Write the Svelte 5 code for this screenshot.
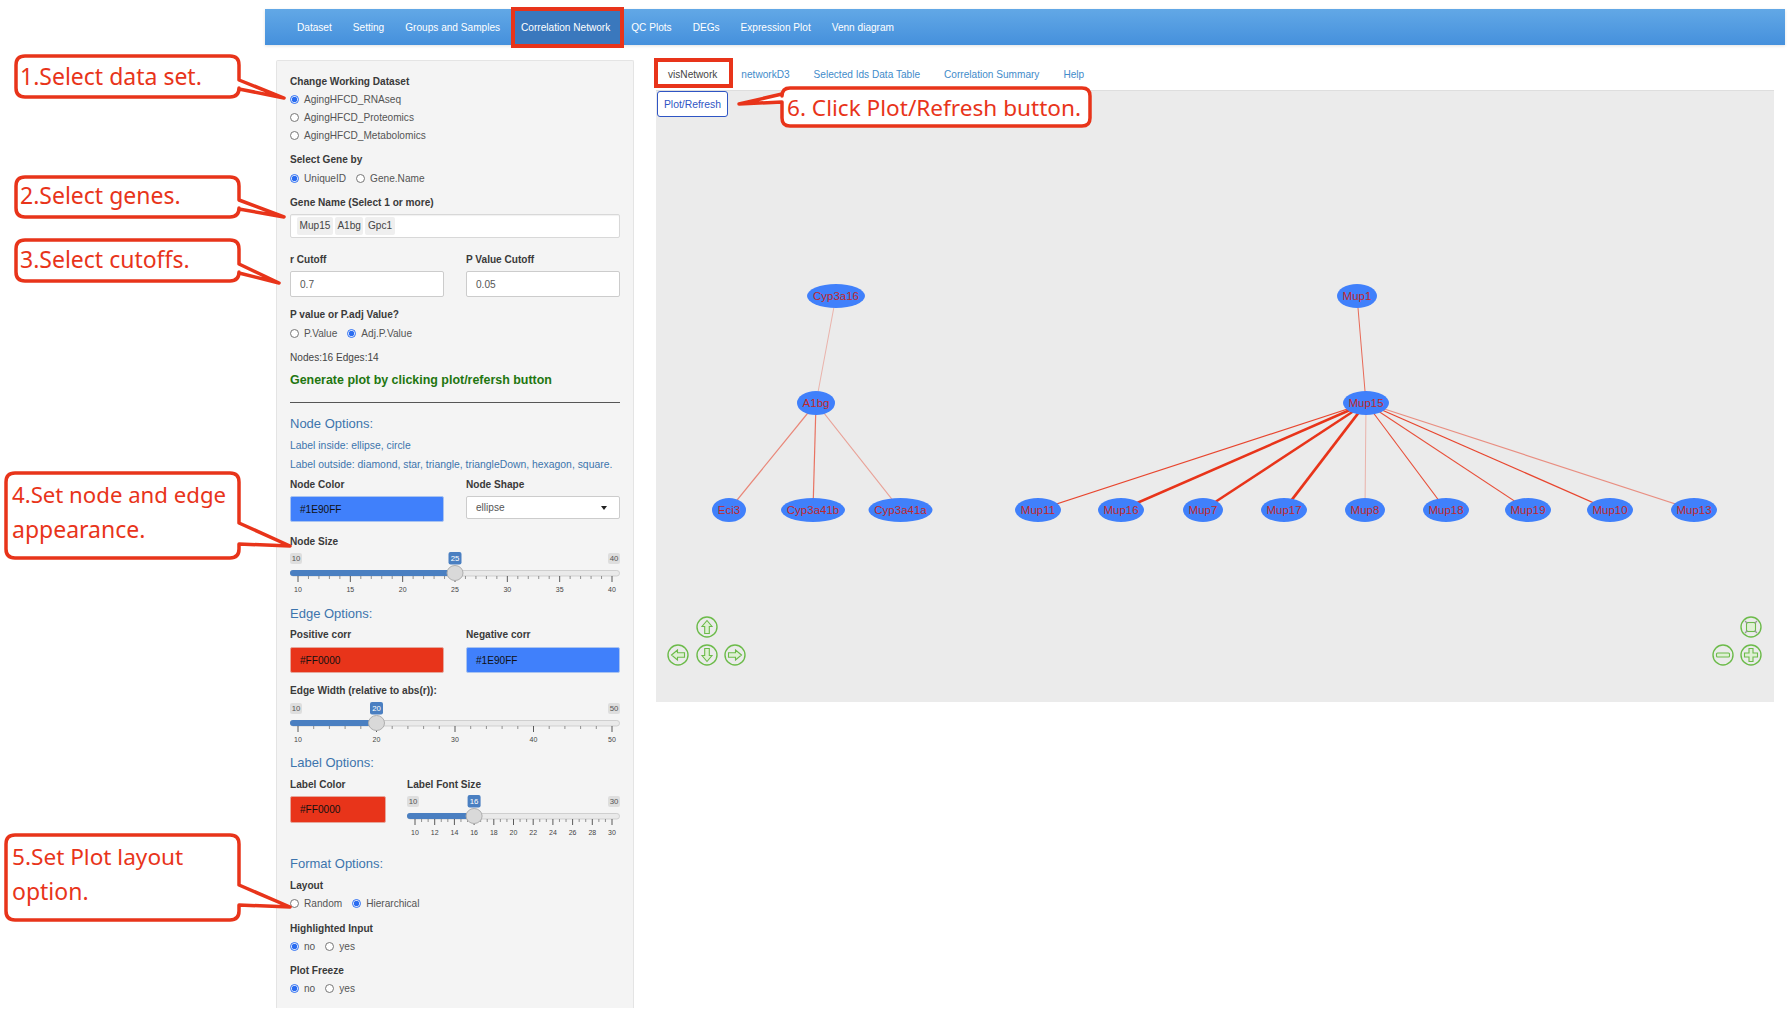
<script>
  const navItems = ['Dataset', 'Setting', 'Groups and Samples', 'Correlation Network', 'QC Plots', 'DEGs', 'Expression Plot', 'Venn diagram'];
  const tabs = ['visNetwork', 'networkD3', 'Selected Ids Data Table', 'Correlation Summary', 'Help'];

  const nodes = {
    Cyp3a16: [836, 296, 29], A1bg: [816, 403, 19], Eci3: [729, 510, 17], Cyp3a41b: [813, 510, 32], Cyp3a41a: [900.5, 510, 32],
    Mup1: [1357, 296, 20], Mup15: [1366, 403, 23], Mup11: [1038, 510, 23], Mup16: [1121, 510, 23], Mup7: [1203, 510, 20],
    Mup17: [1284, 510, 23], Mup8: [1365, 510, 20], Mup18: [1446, 510, 23], Mup19: [1528, 510, 23], Mup10: [1610, 510, 23], Mup13: [1694, 510, 23]
  };
  const edges = [
    ['A1bg', 'Cyp3a16', 1, 0.3], ['A1bg', 'Eci3', 1.2, 0.55], ['A1bg', 'Cyp3a41b', 1.2, 0.65], ['A1bg', 'Cyp3a41a', 1.2, 0.4],
    ['Mup15', 'Mup1', 1, 0.7], ['Mup15', 'Mup11', 1.2, 0.9], ['Mup15', 'Mup16', 2.6, 1], ['Mup15', 'Mup7', 2.4, 1],
    ['Mup15', 'Mup17', 2.8, 1], ['Mup15', 'Mup8', 1, 0.3], ['Mup15', 'Mup18', 1.1, 0.85], ['Mup15', 'Mup19', 1.1, 0.85],
    ['Mup15', 'Mup10', 1.3, 0.9], ['Mup15', 'Mup13', 1.2, 0.5]
  ];

  function grid(w, min, max, majorStep, minorPerMajor, labelStep) {
    const x0 = 8, x1 = w - 8;
    const px = (v) => x0 + ((v - min) / (max - min)) * (x1 - x0);
    const ticks = [], labels = [];
    const minorStep = majorStep / (minorPerMajor + 1);
    for (let v = min; v <= max + 1e-6; v += minorStep) {
      const isMajor = Math.abs((v - min) / majorStep - Math.round((v - min) / majorStep)) < 1e-6;
      ticks.push({ x: px(v), major: isMajor });
    }
    for (let v = min; v <= max; v += labelStep) labels.push({ x: px(v), t: v });
    return { ticks, labels, px };
  }
  const sliders = {
    node: { w: 330, min: 10, max: 40, val: 25, g: grid(330, 10, 40, 5, 4, 5) },
    edge: { w: 330, min: 10, max: 50, val: 20, g: grid(330, 10, 50, 10, 4, 10) },
    font: { w: 213, min: 10, max: 30, val: 16, g: grid(213, 10, 30, 2, 2, 2) }
  };

  const RED = '#e8341a';
  function callout(x0, y0, x1, y1, t1, t2, tip) {
    const r = 9;
    return `M${x0 + r} ${y0} H${x1 - r} Q${x1} ${y0} ${x1} ${y0 + r} V${t1} L${tip[0]} ${tip[1]} L${x1} ${t2} V${y1 - r} Q${x1} ${y1} ${x1 - r} ${y1} H${x0 + r} Q${x0} ${y1} ${x0} ${y1 - r} V${y0 + r} Q${x0} ${y0} ${x0 + r} ${y0} Z`;
  }
  const callouts = [
    callout(16, 56, 239, 97, 80, 89, [284, 98]),
    callout(16, 177, 239, 217, 200, 209, [284, 217]),
    callout(16, 240, 239, 281, 264, 273, [279, 283]),
    callout(6, 473, 239, 558, 523, 544, [290, 546]),
    callout(6, 835, 239, 920, 885, 905, [290, 907])
  ];
  const call6 = 'M790 88 H1082 Q1090 88 1090 96 V118 Q1090 126 1082 126 H790 Q782 126 782 118 V102 L739 104 L782 94 V96 Q782 88 790 88 Z';
  const texts = [
    ['1.Select data set.', 20, 77, 23], ['2.Select genes.', 20, 196, 23], ['3.Select cutoffs.', 20, 260, 23],
    ['4.Set node and edge', 12, 495, 22.2], ['appearance.', 12, 530, 23], ['5.Set Plot layout', 12, 857, 22.6], ['option.', 12, 892, 23]
  ];
</script>

{#snippet radio(name, label, checked)}
  <label class="radio"><input type="radio" {name} {checked} /><span>{label}</span></label>
{/snippet}

{#snippet slider(s)}
  {@const pos = s.g.px(s.val)}
  <svg class="slider" width={s.w} height="44" viewBox="0 0 {s.w} 44">
    <rect x="0" y="2" width="12" height="11" rx="2" fill="#dedede" />
    <text x="6" y="10.3" class="sv">{s.min}</text>
    <rect x={s.w - 12} y="2" width="12" height="11" rx="2" fill="#dedede" />
    <text x={s.w - 6} y="10.3" class="sv">{s.max}</text>
    <rect x={pos - 6.5} y="1" width="13" height="12.5" rx="2" fill="#4a7fc1" />
    <text x={pos} y="10.3" class="sv hi">{s.val}</text>
    <rect x="0.5" y="19.5" width={s.w - 1} height="5.5" rx="2.7" fill="#eaeaea" stroke="#cfcfcf" />
    <rect x="0" y="19" width={pos} height="6" rx="3" fill="#4a7fc1" />
    {#each s.g.ticks as t}
      <line x1={t.x} x2={t.x} y1="25" y2={t.major ? 31 : 28} stroke={t.major ? '#333' : '#777'} stroke-width="0.8" />
    {/each}
    {#each s.g.labels as l}
      <text x={l.x} y="40.5" class="st">{l.t}</text>
    {/each}
    <ellipse cx={pos} cy="22" rx="8" ry="7.5" fill="#d9d9d9" stroke="#aeaeae" />
  </svg>
{/snippet}

<div class="page">
  <nav class="navbar">
    {#each navItems as n}
      <span class="nav-item" class:active={n === 'Correlation Network'}>{n}</span>
    {/each}
  </nav>

  <div class="body">
    <aside class="sidebar">
      <div class="lbl">Change Working Dataset</div>
      <div class="radios col">
        {@render radio('ds', 'AgingHFCD_RNAseq', true)}
        {@render radio('ds', 'AgingHFCD_Proteomics', false)}
        {@render radio('ds', 'AgingHFCD_Metabolomics', false)}
      </div>
      <div class="lbl m10">Select Gene by</div>
      <div class="radios">
        {@render radio('by', 'UniqueID', true)}
        {@render radio('by', 'Gene.Name', false)}
      </div>
      <div class="lbl m10 b5">Gene Name (Select 1 or more)</div>
      <div class="selectize">
        <span class="chip">Mup15</span><span class="chip">A1bg</span><span class="chip">Gpc1</span>
      </div>
      <div class="two m16">
        <div class="cell"><div class="lbl b5">r Cutoff</div><div class="field">0.7</div></div>
        <div class="cell"><div class="lbl b5">P Value Cutoff</div><div class="field">0.05</div></div>
      </div>
      <div class="lbl m12">P value or P.adj Value?</div>
      <div class="radios">
        {@render radio('pv', 'P.Value', false)}
        {@render radio('pv', 'Adj.P.Value', true)}
      </div>
      <div class="plain m10">Nodes:16 Edges:14</div>
      <div class="gen">Generate plot by clicking plot/refersh button</div>
      <hr />
      <h4 class="head h-node">Node Options:</h4>
      <div class="hint h1">Label inside: ellipse, circle</div>
      <div class="hint h2">Label outside: diamond, star, triangle, triangleDown, hexagon, square.</div>
      <div class="two m8">
        <div class="cell"><div class="lbl b5">Node Color</div><div class="field color blue">#1E90FF</div></div>
        <div class="cell">
          <div class="lbl b5">Node Shape</div>
          <div class="field select"><span>ellipse</span><i class="caret"></i></div>
        </div>
      </div>
      <div class="lbl m14 b3">Node Size</div>
      {@render slider(sliders.node)}
      <h4 class="head h-edge">Edge Options:</h4>
      <div class="two m7">
        <div class="cell"><div class="lbl b6">Positive corr</div><div class="field color red">#FF0000</div></div>
        <div class="cell"><div class="lbl b6">Negative corr</div><div class="field color blue">#1E90FF</div></div>
      </div>
      <div class="lbl m12 b4">Edge Width (relative to abs(r)):</div>
      {@render slider(sliders.edge)}
      <h4 class="head h-label">Label Options:</h4>
      <div class="label-row">
        <div class="label-color"><div class="lbl b5">Label Color</div><div class="field color red tall">#FF0000</div></div>
        <div class="label-size"><div class="lbl b3">Label Font Size</div>{@render slider(sliders.font)}</div>
      </div>
      <h4 class="head h-format">Format Options:</h4>
      <div class="lbl m8 b2">Layout</div>
      <div class="radios">
        {@render radio('ly', 'Random', false)}
        {@render radio('ly', 'Hierarchical', true)}
      </div>
      <div class="lbl m11 b2">Highlighted Input</div>
      <div class="radios">
        {@render radio('hi', 'no', true)}
        {@render radio('hi', 'yes', false)}
      </div>
      <div class="lbl m10 b2">Plot Freeze</div>
      <div class="radios">
        {@render radio('fr', 'no', true)}
        {@render radio('fr', 'yes', false)}
      </div>
    </aside>

    <main class="main">
      <div class="tabs">
        {#each tabs as t, i}
          <span class="tab" class:on={i === 0}>{t}</span>
        {/each}
      </div>
      <div class="canvas">
        <button class="plot-btn">Plot/Refresh</button>
        <svg class="net" viewBox="656 90 1118 612" width="1118" height="612">
          {#each edges as [a, b, w, o]}
            <line x1={nodes[a][0]} y1={nodes[a][1]} x2={nodes[b][0]} y2={nodes[b][1]} stroke="#e8341a" stroke-width={w} opacity={o} />
          {/each}
          {#each Object.entries(nodes) as [name, [x, y, rx]]}
            <ellipse cx={x} cy={y} {rx} ry="12" fill="#4080fb" />
            <text {x} y={y + 4} class="nlabel">{name}</text>
          {/each}
          <g class="vis">
            <circle cx="707" cy="627" r="10" />
            <path d="M707 620.5 L712 626.5 H709.3 V633.5 H704.7 V626.5 H702 Z" />
            <circle cx="707" cy="655" r="10" />
            <path d="M707 661.5 L712 655.5 H709.3 V648.5 H704.7 V655.5 H702 Z" />
            <circle cx="678" cy="655" r="10" />
            <path d="M671.5 655 L677.5 650 V652.7 H684.5 V657.3 H677.5 V660 Z" />
            <circle cx="735" cy="655" r="10" />
            <path d="M741.5 655 L735.5 650 V652.7 H728.5 V657.3 H735.5 V660 Z" />
            <circle cx="1723" cy="655" r="10" />
            <rect x="1716.5" y="653" width="13" height="4" rx="1" />
            <circle cx="1751" cy="655" r="10" />
            <path d="M1749 648.5 H1753 V653 H1757.5 V657 H1753 V661.5 H1749 V657 H1744.5 V653 H1749 Z" />
            <circle cx="1751" cy="627" r="10" />
            <rect x="1746.5" y="622.5" width="9" height="9" />
            <path class="corner" d="M1745 621 L1747.5 623.5 M1757 621 L1754.5 623.5 M1745 633 L1747.5 630.5 M1757 633 L1754.5 630.5" />
          </g>
        </svg>
      </div>
    </main>
  </div>

  <svg class="overlay" width="1791" height="1017" viewBox="0 0 1791 1017">
    <rect x="513" y="9" width="109" height="37" fill="none" stroke={RED} stroke-width="4" />
    <rect x="656" y="60" width="75" height="26" fill="none" stroke={RED} stroke-width="4" />
    {#each callouts as d}
      <path {d} fill="#fff" stroke={RED} stroke-width="3.5" stroke-linejoin="round" />
    {/each}
    <path d={call6} fill="#fff" stroke={RED} stroke-width="3.5" stroke-linejoin="round" />
    {#each texts as [t, x, y, fs]}
      <text {x} y={y + 8} class="ctext" style:font-size="{fs}px">{t}</text>
    {/each}
    <text x="787" y="116" class="ctext six">6. Click Plot/Refresh button.</text>
  </svg>
</div>

<style>
  :global(body) { margin: 0; background: #fff; }
  .page {
    position: relative; width: 1791px; height: 1017px; overflow: hidden;
    font-family: "Liberation Sans", Arial, sans-serif; color: #333; font-size: 10.1px;
    padding-top: 9px; box-sizing: border-box;
  }
  .navbar {
    display: flex; align-items: stretch; height: 36px; margin: 0 6px 0 265px; padding-left: 21.5px;
    background: linear-gradient(#62a8e6, #4590dc); box-shadow: 0 1px 3px rgba(0,0,0,.12);
  }
  .nav-item { display: flex; align-items: center; padding: 0 10.5px; color: #fff; font-size: 10.1px; white-space: nowrap; }
  .nav-item.active { background: #3a78bd; }
  .body { display: flex; margin: 15px 0 0 276px; align-items: flex-start; }
  .sidebar {
    width: 358px; height: 948px; box-sizing: border-box; padding: 15px 13px 0 13px; flex: none;
    background: #f4f4f4; border: 1px solid #e4e4e4; border-bottom: 0; border-radius: 2px 2px 0 0;
    display: flex; flex-direction: column;
  }
  .lbl { font-weight: 700; font-size: 10.1px; line-height: 12px; color: #3a3a3a; margin-bottom: 3px; white-space: nowrap; }
  .lbl.b2 { margin-bottom: 2px; } .lbl.b3 { margin-bottom: 3px; } .lbl.b4 { margin-bottom: 4px; } .lbl.b5 { margin-bottom: 5px; } .lbl.b6 { margin-bottom: 6px; }
  .m7 { margin-top: 7px; } .m8 { margin-top: 8px; } .m10 { margin-top: 10px; } .m11 { margin-top: 11px; } .m12 { margin-top: 12px; } .m14 { margin-top: 14px; } .m16 { margin-top: 16px; }
  .radios { display: flex; gap: 10px; }
  .radios.col { flex-direction: column; gap: 0; margin-top: -1px; }
  .radio { display: flex; align-items: center; height: 18px; gap: 5px; color: #555; font-size: 10.1px; white-space: nowrap; }
  .radio input { width: 9px; height: 9px; margin: 0; accent-color: #2a6cf0; }
  .selectize {
    height: 24px; box-sizing: border-box; border: 1px solid #d8d8d8; background: #fff; border-radius: 2px;
    display: flex; align-items: center; gap: 2px; padding-left: 6px; box-shadow: inset 0 1px 1px rgba(0,0,0,.06);
  }
  .chip { background: #efefef; border-radius: 2px; padding: 3px 2.5px; line-height: 12px; color: #444; }
  .two { display: flex; gap: 22px; }
  .cell { width: 154px; flex: none; }
  .field {
    height: 26px; box-sizing: border-box; border: 1px solid #ccc; border-radius: 2px; background: #fff;
    display: flex; align-items: center; padding-left: 9px; color: #555; font-size: 10.1px;
  }
  .field.color { color: #111; font-weight: 400; }
  .field.blue { background: #4080fb; border-color: #a9c3f0; }
  .field.red { background: #e8341a; border-color: #e6a79c; }
  .field.tall { height: 27px; width: 95.5px; }
  .field.select { height: 23px; margin-top: 1px; justify-content: space-between; padding-right: 12px; }
  .caret { width: 0; height: 0; border: 3px solid transparent; border-top: 4px solid #222; border-bottom: 0; }
  .plain { line-height: 12px; color: #444; }
  .gen { margin-top: 8px; line-height: 16px; font-size: 12.45px; font-weight: 700; color: #22760f; white-space: nowrap; }
  hr { width: 100%; margin: 14px 0 0; border: 0; border-top: 1.5px solid #555; }
  .head { margin: 0; font-weight: 400; font-size: 13px; line-height: 16px; color: #3d74ad; white-space: nowrap; }
  .h-node { margin-top: 13px; }
  .h-edge { margin-top: 11px; }
  .h-label { margin-top: 10px; }
  .h-format { margin-top: 14px; }
  .hint { line-height: 12px; color: #3d74ad; font-size: 10.4px; white-space: nowrap; }
  .h1 { margin-top: 8px; } .h2 { margin-top: 7px; }
  .slider { display: block; flex: none; }
  .slider text { font-family: "Liberation Sans", Arial, sans-serif; text-anchor: middle; }
  .sv { font-size: 7.8px; fill: #555; }
  .sv.hi { fill: #fff; }
  .st { font-size: 7px; fill: #444; }
  .label-row { display: flex; gap: 19px; margin-top: 8px; height: 63px; }
  .label-color { width: 98px; flex: none; }
  .label-size { width: 213px; flex: none; }
  .main { width: 1118px; margin-left: 22px; flex: none; }
  .tabs { display: flex; height: 30px; align-items: center; }
  .tab { padding: 0 12px; color: #428bca; font-size: 10.1px; white-space: nowrap; line-height: 30px; }
  .tab.on { color: #444; }
  .canvas { position: relative; height: 612px; background: #ebebeb; border-top: 1px solid #dedede; box-sizing: border-box; padding: 0 0 0 1px; }
  .plot-btn {
    position: relative; z-index: 1; width: 71px; height: 26px; padding: 0; background: #fff; border: 1.5px solid #2f55c4; border-radius: 3px;
    color: #2f55c4; font: 10.4px "Liberation Sans", Arial, sans-serif;
  }
  .net { position: absolute; left: 0; top: -1px; }
  .nlabel { font-family: "Liberation Sans", Arial, sans-serif; font-size: 11.5px; fill: #c0282a; text-anchor: middle; }
  .vis circle { fill: none; stroke: #6cbb4a; stroke-width: 1.4; }
  .vis path, .vis rect { fill: #dff0d4; stroke: #6cbb4a; stroke-width: 1.1; }
  .vis .corner { stroke: #999; stroke-width: 1.2; fill: none; }
  .overlay { position: absolute; left: 0; top: 0; pointer-events: none; }
  .ctext { font-family: "Noto Sans", "Open Sans", sans-serif; font-size: 23px; fill: #e8341a; }
  .ctext.six { font-size: 22.6px; }
</style>
